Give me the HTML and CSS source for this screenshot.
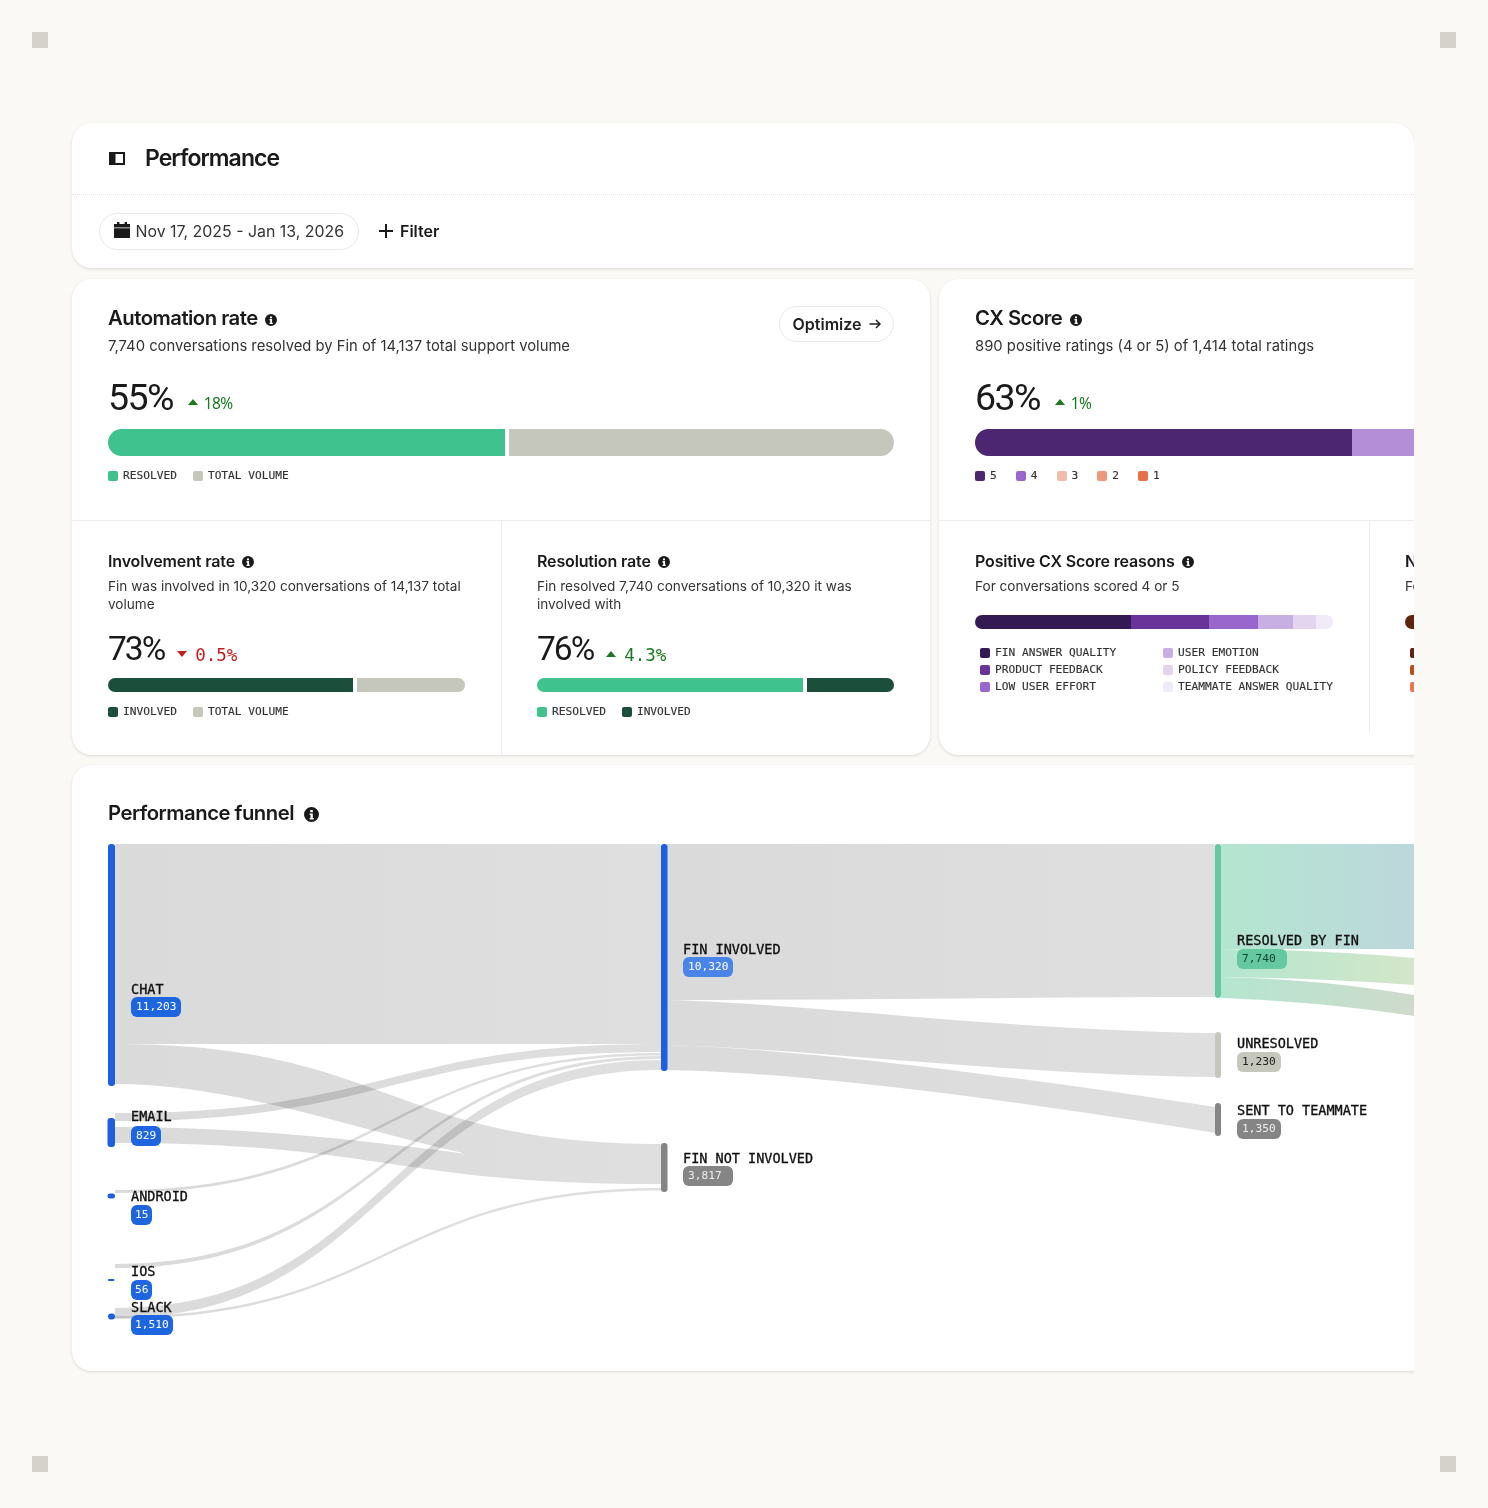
FILE: index.html
```html
<!DOCTYPE html>
<html>
<head>
    <meta charset="utf-8">
    <link rel="stylesheet" href="styles.css">
</head>
<body>
    <div class="corner corner-tl"></div>
    <div class="corner corner-tr"></div>
    <div class="corner corner-bl"></div>
    <div class="corner corner-br"></div>

    <svg class="defs" width="0" height="0">
        <symbol id="info" viewBox="0 0 16 16">
            <path fill-rule="evenodd" d="M8 0a8 8 0 1 1 0 16A8 8 0 0 1 8 0zM6.600 3.200h2.800v2.500H6.600zM6 6.800h3.400v4.800h1V13.400H6v-1.800h1v-3H6z"/>
        </symbol>
    </svg>

    <div class="frame">
        <div class="card header-card">
            <div class="title-row">
                <svg class="panel-icon" viewBox="0 0 16 13"><path fill-rule="evenodd" d="M0 0h16v13H0zM6.500 2v9H14V2z"/></svg>
                <h1>Performance</h1>
            </div>
            <div class="filter-row">
                <div class="date-pill">
                    <svg class="cal-icon" viewBox="0 0 16 16"><path d="M3 0h2.400v2h5.200V0H13v2h3v3.400H0V2h3zM0 6.200h16V16H0z"/></svg>
                    <span>Nov 17, 2025 - Jan 13, 2026</span>
                </div>
                <div class="filter-btn">
                    <svg class="plus-icon" viewBox="0 0 14 14"><path d="M7 0v14M0 7h14"/></svg>
                    <span>Filter</span>
                </div>
            </div>
        </div>

        <div class="cards-grid">
            <div class="card">
                <div class="top-section">
                    <div class="optimize">Optimize
                        <svg class="arrow-icon" viewBox="0 0 12 10"><path d="M0.500 5h10M7 1l4 4-4 4"/></svg>
                    </div>
                    <div class="card-title">Automation rate <svg class="info info-sm"><use href="#info"/></svg></div>
                    <div class="card-sub">7,740 conversations resolved by Fin of 14,137 total support volume</div>
                    <div class="metric">
                        <span class="metric-big">55%</span>
                        <span class="tri-up"></span>
                        <span class="delta delta-up">18%</span>
                    </div>
                    <div class="bar bar-lg">
                        <div class="seg green w-397"></div>
                        <div class="seg stone grow"></div>
                    </div>
                    <div class="legend">
                        <div class="legend-item"><span class="swatch green"></span>RESOLVED</div>
                        <div class="legend-item"><span class="swatch stone"></span>TOTAL VOLUME</div>
                    </div>
                </div>
                <div class="lower">
                    <div class="section">
                        <div class="section-title">Involvement rate <svg class="info info-sm"><use href="#info"/></svg></div>
                        <div class="section-sub">Fin was involved in 10,320 conversations of 14,137 total volume</div>
                        <div class="metric metric-sm">
                            <span class="metric-mid">73%</span>
                            <span class="tri-down"></span>
                            <span class="delta delta-down">0.5%</span>
                        </div>
                        <div class="bar bar-sm">
                            <div class="seg forest w-245"></div>
                            <div class="seg stone grow"></div>
                        </div>
                        <div class="legend">
                            <div class="legend-item"><span class="swatch forest"></span>INVOLVED</div>
                            <div class="legend-item"><span class="swatch stone"></span>TOTAL VOLUME</div>
                        </div>
                    </div>
                    <div class="section">
                        <div class="section-title">Resolution rate <svg class="info info-sm"><use href="#info"/></svg></div>
                        <div class="section-sub">Fin resolved 7,740 conversations of 10,320 it was involved with</div>
                        <div class="metric metric-sm">
                            <span class="metric-mid">76%</span>
                            <span class="tri-up"></span>
                            <span class="delta delta-wide">4.3%</span>
                        </div>
                        <div class="bar bar-sm">
                            <div class="seg green w-266"></div>
                            <div class="seg forest grow"></div>
                        </div>
                        <div class="legend">
                            <div class="legend-item"><span class="swatch green"></span>RESOLVED</div>
                            <div class="legend-item"><span class="swatch forest"></span>INVOLVED</div>
                        </div>
                    </div>
                </div>
            </div>

            <div class="card">
                <div class="top-section">
                    <div class="card-title">CX Score <svg class="info info-sm"><use href="#info"/></svg></div>
                    <div class="card-sub">890 positive ratings (4 or 5) of 1,414 total ratings</div>
                    <div class="metric">
                        <span class="metric-big">63%</span>
                        <span class="tri-up"></span>
                        <span class="delta delta-up">1%</span>
                    </div>
                    <div class="bar bar-lg bar-joined">
                        <div class="seg purple-5 w-377"></div>
                        <div class="seg purple-4 w-120"></div>
                        <div class="seg peach-3 w-90"></div>
                        <div class="seg peach-2 w-80"></div>
                        <div class="seg peach-1 grow"></div>
                    </div>
                    <div class="legend legend-scores">
                        <div class="legend-item"><span class="swatch purple-5"></span>5</div>
                        <div class="legend-item"><span class="swatch purple-3"></span>4</div>
                        <div class="legend-item"><span class="swatch peach-3"></span>3</div>
                        <div class="legend-item"><span class="swatch peach-2"></span>2</div>
                        <div class="legend-item"><span class="swatch peach-1"></span>1</div>
                    </div>
                </div>
                <div class="lower lower-cx">
                    <div class="section">
                        <div class="section-title">Positive CX Score reasons <svg class="info info-sm"><use href="#info"/></svg></div>
                        <div class="section-sub">For conversations scored 4 or 5</div>
                        <div class="bar bar-sm bar-joined bar-reasons">
                            <div class="seg violet-1 w-156"></div>
                            <div class="seg violet-2 w-78"></div>
                            <div class="seg violet-3 w-49"></div>
                            <div class="seg violet-4 w-35"></div>
                            <div class="seg violet-5 w-23"></div>
                            <div class="seg violet-6 grow"></div>
                        </div>
                        <div class="reason-grid">
                            <div class="legend-item"><span class="swatch violet-1"></span>FIN ANSWER QUALITY</div>
                            <div class="legend-item"><span class="swatch violet-4"></span>USER EMOTION</div>
                            <div class="legend-item"><span class="swatch violet-2"></span>PRODUCT FEEDBACK</div>
                            <div class="legend-item"><span class="swatch violet-5"></span>POLICY FEEDBACK</div>
                            <div class="legend-item"><span class="swatch violet-3"></span>LOW USER EFFORT</div>
                            <div class="legend-item"><span class="swatch violet-6"></span>TEAMMATE ANSWER QUALITY</div>
                        </div>
                    </div>
                    <div class="section">
                        <div class="section-title">Negative CX Score reasons <svg class="info info-sm"><use href="#info"/></svg></div>
                        <div class="section-sub">For conversations scored 1, 2 or 3</div>
                        <div class="bar bar-sm bar-joined bar-reasons">
                            <div class="seg rust-1 w-156"></div>
                            <div class="seg rust-2 w-78"></div>
                            <div class="seg rust-3 grow"></div>
                        </div>
                        <div class="reason-grid">
                            <div class="legend-item"><span class="swatch rust-1"></span>FIN ANSWER QUALITY</div>
                            <div class="legend-item"></div>
                            <div class="legend-item"><span class="swatch rust-2"></span>PRODUCT FEEDBACK</div>
                            <div class="legend-item"></div>
                            <div class="legend-item"><span class="swatch rust-3"></span>LOW USER EFFORT</div>
                        </div>
                    </div>
                </div>
            </div>
        </div>

        <div class="card funnel-card">
            <div class="funnel-title">Performance funnel <svg class="info info-md"><use href="#info"/></svg></div>
            <div class="funnel-canvas">
                <svg class="sankey" width="1342" height="527" viewBox="72 844 1342 527">
                    <defs>
                        <linearGradient id="flow-gray" x1="0" x2="1" y1="0" y2="0">
                            <stop offset="0" stop-color="#dadada"/>
                            <stop offset="1" stop-color="#dfdfdf"/>
                        </linearGradient>
                        <linearGradient id="flow-band-1" x1="0" x2="1" y1="0" y2="0">
                            <stop offset="0" stop-color="#b4e6d0"/>
                            <stop offset="1" stop-color="#bdd7dc"/>
                        </linearGradient>
                        <linearGradient id="flow-band-2" x1="0" x2="1" y1="0" y2="0">
                            <stop offset="0" stop-color="#b4e6d0"/>
                            <stop offset="1" stop-color="#d3e6c9"/>
                        </linearGradient>
                        <linearGradient id="flow-band-3" x1="0" x2="1" y1="0" y2="0">
                            <stop offset="0" stop-color="#b4e6d0"/>
                            <stop offset="1" stop-color="#cfdacc"/>
                        </linearGradient>
                    </defs>

                    <!-- flows, source to fin -->
                    <g class="flows">
                        <path d="M115 844H661V1044H115Z"/>
                        <path d="M115 1044C388 1044 388 1144 661 1144V1184C388 1184 388 1143 115 1143V1127C230 1127 340 1137 467 1154C340 1125 230 1084 115 1084Z"/>
                        <path d="M115 1113C388 1113 388 1044 661 1044L661 1052C388 1052 388 1121 115 1121Z"/>
                        <path d="M115 1190C388 1190 388 1053 661 1053L661 1055.500C388 1055.500 388 1193 115 1193Z"/>
                        <path d="M115 1264C388 1264 388 1056 661 1056L661 1059C388 1059 388 1268 115 1268Z"/>
                        <path d="M115 1308C388 1308 388 1060 661 1060L661 1070C388 1070 388 1318 115 1318Z"/>
                        <path d="M115 1316.500C388 1316.500 388 1188 661 1188L661 1190.500C388 1190.500 388 1319 115 1319Z"/>
                        <path d="M667 844H1215V997C1040 997 850 1000 667 1000Z"/>
                        <path d="M667 1000C800 1003 1000 1030 1215 1033V1077C1000 1074 800 1048 667 1045Z"/>
                        <path d="M667 1045C800 1049 1000 1074 1215 1107V1133C1000 1098 800 1072 667 1070Z"/>
                    </g>
                    <path fill="url(#flow-band-1)" d="M1221 844H1414V949H1221Z"/>
                    <path fill="url(#flow-band-2)" d="M1221 949C1300 950 1360 953 1414 958V985C1360 981 1300 978 1221 977Z"/>
                    <path fill="url(#flow-band-3)" d="M1221 977C1300 979 1360 986 1414 995V1016C1360 1008 1300 1001 1221 998Z"/>

                    <!-- nodes -->
                    <rect class="node-blue" x="108" y="844" width="7" height="242" rx="3"/>
                    <rect class="node-blue" x="107.500" y="1118" width="7.500" height="29" rx="3"/>
                    <rect class="node-blue" x="107.500" y="1193.500" width="7.500" height="5" rx="2.500"/>
                    <rect class="node-blue" x="108" y="1279" width="6.500" height="2" rx="1"/>
                    <rect class="node-blue" x="108" y="1313.500" width="7" height="6" rx="3"/>
                    <rect class="node-blue" x="661" y="844" width="6.500" height="227" rx="3"/>
                    <rect class="node-gray" x="661" y="1143" width="6.500" height="49" rx="3"/>
                    <rect class="node-green" x="1215" y="844" width="6" height="154" rx="3"/>
                    <rect class="node-stone" x="1215" y="1032" width="6" height="46" rx="3"/>
                    <rect class="node-gray" x="1215" y="1103" width="6" height="33" rx="3"/>
                </svg>

                <div class="node-label label-chat">CHAT<span class="badge badge-blue">11,203</span></div>
                <div class="node-label label-email">EMAIL<span class="badge badge-blue">829</span></div>
                <div class="node-label label-android">ANDROID<span class="badge badge-blue badge-tight">15</span></div>
                <div class="node-label label-ios">IOS<span class="badge badge-blue badge-tight">56</span></div>
                <div class="node-label label-slack">SLACK<span class="badge badge-blue badge-tight">1,510</span></div>
                <div class="node-label label-involved">FIN INVOLVED<span class="badge badge-light-blue">10,320</span></div>
                <div class="node-label label-not-involved">FIN NOT INVOLVED<span class="badge badge-gray badge-fixed">3,817</span></div>
                <div class="node-label label-resolved">RESOLVED BY FIN<span class="badge badge-green badge-fixed">7,740</span></div>
                <div class="node-label label-unresolved">UNRESOLVED<span class="badge badge-stone">1,230</span></div>
                <div class="node-label label-teammate">SENT TO TEAMMATE<span class="badge badge-gray">1,350</span></div>
            </div>
        </div>
    </div>
</body>
</html>
```

FILE: styles.css
```css
body {
    position: relative;
    box-sizing: border-box;
    height: 1508px;
    margin: 0;
    padding: 123px 0 0 72px;
    overflow: hidden;
    font-family: Inter, sans-serif;
    background: #faf9f5;
    color: #1a1a1a;
}

.defs {
    position: absolute;
}

/* Corner marks */
.corner {
    position: absolute;
    width: 16px;
    height: 16px;
    background: #d4d2cb;
}

.corner-tl { left: 32px; top: 32px; }
.corner-tr { left: 1440px; top: 32px; }
.corner-bl { left: 32px; top: 1456px; }
.corner-br { left: 1440px; top: 1456px; }

.frame {
    width: 1342px;
    clip-path: inset(-10px 0 -10px -10px);
}

.card {
    background: #fff;
    border-radius: 20px;
    box-shadow: 0 1px 3px rgba(30,30,20,0.14);
}

/* Header */
.header-card {
    height: 145px;
    border-radius: 20px 20px 0 20px;
}

.title-row {
    display: flex;
    align-items: center;
    box-sizing: border-box;
    height: 72px;
    padding: 0 0 1px 37px;
    border-bottom: 1px dotted #e4e4df;
}

.panel-icon {
    width: 16px;
    height: 13px;
    margin-right: 20px;
    fill: #1a1a1a;
}

h1 {
    margin: 0;
    font-size: 23px;
    font-weight: 600;
    letter-spacing: -0.950px;
}

.filter-row {
    display: flex;
    align-items: center;
    gap: 20px;
    height: 72px;
    padding-left: 27px;
}

.date-pill {
    display: flex;
    align-items: center;
    gap: 5.500px;
    box-sizing: border-box;
    width: 260px;
    height: 37px;
    padding-left: 14px;
    border: 1px solid #e9e9e5;
    border-radius: 19px;
    font-size: 15.900px;
    color: #333;
}

.cal-icon {
    width: 16px;
    height: 16px;
    margin-top: -3px;
    fill: #1a1a1a;
}

.filter-btn {
    display: flex;
    align-items: center;
    gap: 7px;
    font-size: 16px;
    font-weight: 600;
}

.plus-icon {
    width: 14px;
    height: 14px;
    fill: none;
    stroke: #1a1a1a;
    stroke-width: 2;
}

/* Metric cards */
.cards-grid {
    display: grid;
    grid-template-columns: 858px 858px;
    gap: 9px;
    width: 1725px;
    margin: 11px 0 10px;
}

.top-section {
    position: relative;
    box-sizing: border-box;
    height: 242px;
    padding: 25px 36px 0;
    border-bottom: 1px solid #ececea;
}

.optimize {
    position: absolute;
    top: 27px;
    right: 36px;
    display: flex;
    align-items: center;
    gap: 7px;
    box-sizing: border-box;
    height: 36px;
    padding: 0 12.500px;
    border: 1px solid #e9e9e5;
    border-radius: 18px;
    font-size: 16px;
    font-weight: 600;
    color: #222;
}

.arrow-icon {
    width: 12px;
    height: 10px;
    fill: none;
    stroke: #222;
    stroke-width: 1.500;
}

.card-title {
    font-size: 20.300px;
    font-weight: 600;
    line-height: 28px;
    letter-spacing: -0.500px;
}

.card-sub {
    margin-top: 4px;
    font-size: 14.800px;
    line-height: 20px;
    color: #333;
}

.info {
    fill: #1a1a1a;
    vertical-align: -1px;
}

.info-sm {
    width: 12px;
    height: 12px;
    margin-left: 3px;
}

.info-md {
    width: 15px;
    height: 15px;
    margin-left: 5px;
    vertical-align: -2px;
}

.metric {
    display: flex;
    align-items: baseline;
    height: 44px;
    margin-top: 19px;
    line-height: 44px;
}

.metric-sm {
    height: 36px;
    margin-top: 18px;
    line-height: 36px;
}

.metric-big {
    font-family: Roboto, sans-serif;
    font-size: 37.500px;
    letter-spacing: -1.600px;
    color: #1a1a1a;
}

.metric-mid {
    font-family: Roboto, sans-serif;
    font-size: 33.500px;
    letter-spacing: -2px;
    color: #1a1a1a;
}

.tri-up,
.tri-down {
    align-self: center;
    width: 0;
    height: 0;
    margin: 9px 6px 0 15px;
    border-left: 5.500px solid transparent;
    border-right: 5.500px solid transparent;
}

.metric-sm .tri-up,
.metric-sm .tri-down {
    margin: 10px 8px 0 13px;
}

.tri-up {
    border-bottom: 6px solid #1a7a1f;
}

.tri-down {
    border-top: 6px solid #c11f1f;
}

.delta {
    font-family: "Noto Sans", sans-serif;
    font-size: 15.500px;
    letter-spacing: -0.600px;
    transform: translateY(-1px);
}

.delta-up { color: #1a7a1f; }

.delta-down,
.delta-wide {
    font-family: "DejaVu Sans Mono", monospace;
    font-size: 17.500px;
    letter-spacing: 0;
    transform: translateY(1px);
}

.delta-down { color: #c11f1f; }
.delta-wide { color: #1a7a1f; }

/* Bars */
.bar {
    display: flex;
    gap: 4px;
    overflow: hidden;
}

.bar-lg {
    height: 27px;
    margin-top: 10px;
    border-radius: 14px;
}

.bar-sm {
    height: 14px;
    margin-top: 11px;
    border-radius: 7px;
}

.bar-joined {
    gap: 0;
}

.bar-reasons {
    margin-top: 20px;
}

.grow { flex: 1; }
.w-23 { width: 23px; }
.w-35 { width: 35px; }
.w-49 { width: 49px; }
.w-78 { width: 78px; }
.w-80 { width: 80px; }
.w-90 { width: 90px; }
.w-120 { width: 120px; }
.w-156 { width: 156px; }
.w-245 { width: 245px; }
.w-266 { width: 266px; }
.w-377 { width: 377px; }
.w-397 { width: 397px; }

.green { background: #40c28f; }
.stone { background: #c5c7bd; }
.forest { background: #1b4f3c; }
.purple-5 { background: #4d2672; }
.purple-4 { background: #b48fd8; }
.purple-3 { background: #9866cc; }
.peach-3 { background: #efbda9; }
.peach-2 { background: #ea9a7b; }
.peach-1 { background: #e4734a; }
.violet-1 { background: #331a52; }
.violet-2 { background: #69339a; }
.violet-3 { background: #9866cc; }
.violet-4 { background: #c8afe3; }
.violet-5 { background: #e3d5f0; }
.violet-6 { background: #f1ebf9; }
.rust-1 { background: #5f2410; }
.rust-2 { background: #b94f1e; }
.rust-3 { background: #e8784f; }

.legend {
    display: flex;
    gap: 16px;
    margin-top: 13px;
}

.legend-scores {
    gap: 19px;
}

.legend-item {
    display: flex;
    align-items: center;
    gap: 5px;
    height: 14px;
    font-family: "DejaVu Sans Mono", monospace;
    font-size: 11.200px;
    line-height: 14px;
    color: #333;
    -webkit-text-stroke: 0.150px #333;
}

.swatch {
    flex: none;
    width: 10px;
    height: 10px;
    border-radius: 2px;
}

/* Lower sections */
.lower {
    display: grid;
    grid-template-columns: 430px 1fr;
    height: 234px;
}

.lower-cx {
    grid-template-columns: 431px 1fr;
    height: 211px;
}

.section {
    box-sizing: border-box;
    padding: 29px 36px 0;
}

.section + .section {
    padding-left: 35px;
}

.section:first-child {
    border-right: 1px solid #ececea;
}

.section-title {
    font-size: 16px;
    font-weight: 600;
    line-height: 22px;
    letter-spacing: -0.150px;
}

.section-sub {
    margin-top: 5px;
    font-size: 13.600px;
    line-height: 18px;
    color: #333;
}

.reason-grid {
    display: grid;
    grid-template-columns: 183px 183px;
    row-gap: 3px;
    margin-top: 17px;
    padding-left: 5px;
}

/* Funnel */
.funnel-card {
    width: 1400px;
    height: 606px;
}

.funnel-title {
    box-sizing: border-box;
    height: 79px;
    padding: 33px 36px 0;
    font-size: 20.300px;
    font-weight: 600;
    line-height: 30px;
    letter-spacing: -0.500px;
}

.funnel-canvas {
    position: relative;
    height: 527px;
}

.sankey {
    display: block;
}

.flows path {
    fill: url(#flow-gray);
    mix-blend-mode: multiply;
}

.node-blue { fill: #1d5fe0; }
.node-gray { fill: #858585; }
.node-green { fill: #64c9a0; }
.node-stone { fill: #c5c7bd; }

.node-label {
    position: absolute;
    font-family: "DejaVu Sans Mono", monospace;
    font-size: 13.500px;
    line-height: 16px;
    white-space: nowrap;
    color: #111;
    -webkit-text-stroke: 0.350px #111;
}

.badge {
    display: block;
    width: fit-content;
    height: 20px;
    padding: 0 5px;
    border-radius: 6px;
    font-size: 11.200px;
    line-height: 20px;
    -webkit-text-stroke: 0;
}

.badge-blue { background: #1d66e0; color: #fff; }
.badge-light-blue { background: #4a84e8; color: #fff; }
.badge-gray { background: #858585; color: #eee; }
.badge-green { background: #64c9a0; color: #143; }
.badge-stone { background: #c5c7bd; color: #222; }
.badge-fixed { width: 40px; }
.badge-tight { padding: 0 4px; }

.label-chat { left: 59px; top: 137px; }
.label-email { left: 59px; top: 264px; }
.label-email .badge { margin-top: 2px; }
.label-android { left: 59px; top: 344px; }
.label-ios { left: 59px; top: 419px; }
.label-android .badge,
.label-ios .badge,
.label-unresolved .badge,
.label-teammate .badge,
.label-resolved .badge { margin-top: 1px; }
.label-slack { left: 59px; top: 455px; }
.label-involved { left: 611px; top: 97px; }
.label-not-involved { left: 611px; top: 306px; }
.label-resolved { left: 1165px; top: 88px; }
.label-unresolved { left: 1165px; top: 191px; }
.label-teammate { left: 1165px; top: 258px; }
```
